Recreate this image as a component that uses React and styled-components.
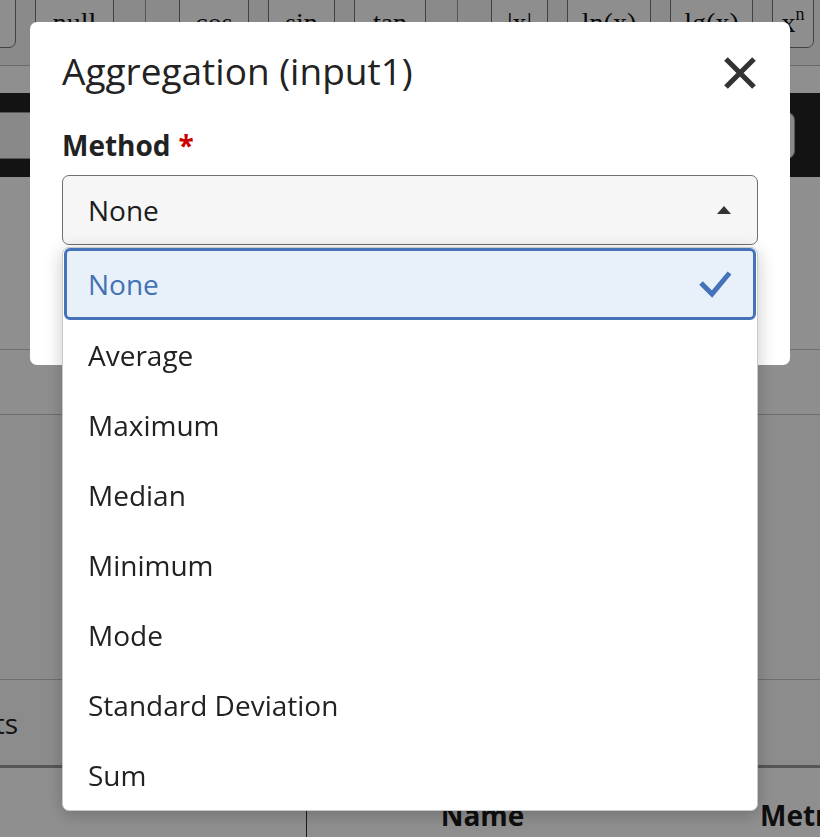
import React from 'react';
import styled, { createGlobalStyle } from 'styled-components';

const GlobalStyle = createGlobalStyle`
  html, body {
    margin: 0;
    padding: 0;
    height: 100%;
    overflow: hidden;
    background: #fff;
    font-family: "Open Sans", "Noto Sans", sans-serif;
  }
`;

const toolButtons = [
  { text: 'null', width: 79 },
  'divider',
  { text: 'cos', width: 70 },
  { text: 'sin', width: 67 },
  { text: 'tan', width: 72 },
  'divider',
  { text: '|x|', width: 57 },
  { text: 'ln(x)', width: 84 },
  { text: 'lg(x)', width: 83 },
  { text: 'x', sup: 'n', width: 42 },
];

const methods = [
  'None',
  'Average',
  'Maximum',
  'Median',
  'Minimum',
  'Mode',
  'Standard Deviation',
  'Sum',
];

const Page = styled.div`
  width: 820px;
  height: 837px;
  overflow: hidden;
  background: #fff;
`;

const Toolbar = styled.div`
  display: flex;
  align-items: stretch;
  gap: 19px;
  margin-top: -12px;
  margin-left: -44px;
  padding-bottom: 17px;
  background: #f7f7f7;
  border-bottom: 1px solid #bbb;
`;

const ToolButton = styled.div`
  flex: none;
  box-sizing: border-box;
  width: ${(p) => p.$width}px;
  height: 60px;
  padding-top: 20px;
  border: 1px solid #777;
  border-radius: 7px;
  background: #fdfdfd;
  font-family: "Liberation Serif", serif;
  font-size: 28px;
  line-height: 28px;
  color: #111;
  text-align: center;
  white-space: nowrap;
  sup {
    font-size: 18px;
    vertical-align: 12px;
    line-height: 0;
  }
`;

const ToolDivider = styled.div`
  flex: none;
  width: 1px;
  margin: 0 14px 0 12px;
  background: #999;
`;

const Strip = styled.div`
  height: 27px;
  background: #fff;
`;

const DarkBar = styled.div`
  padding: 19px 25px 18px 0;
  background: #222;
`;

const SearchField = styled.div`
  height: 45px;
  margin-left: -10px;
  border-radius: 0 8px 8px 0;
  border: 1px solid #999;
  background: #f4f4f4;
`;

const Panel = styled.div`
  height: ${(p) => p.$height}px;
  background: ${(p) => p.$bg || '#fff'};
  border-bottom: 1px solid #c4c4c4;
`;

const TabRow = styled.div`
  display: flex;
  align-items: center;
  height: 85px;
  background: #fafafa;
  border-bottom: 3px solid #999;
`;

const Tab = styled.div`
  display: flex;
  justify-content: flex-end;
  width: 18px;
  overflow: hidden;
  white-space: nowrap;
  font-size: 28px;
  color: #222;
`;

const TableHead = styled.div`
  display: grid;
  grid-template-columns: 306px 352px 1fr;
  height: 80px;
  background: #fff;
`;

const HeadCell = styled.div`
  padding-top: 26px;
  font-size: 28px;
  line-height: 42px;
  font-weight: 700;
  color: #1a1a1a;
  text-align: ${(p) => p.$align || 'center'};
  padding-left: ${(p) => p.$indent || 0}px;
  border-left: ${(p) => (p.$line ? '1px solid #333' : 'none')};
  white-space: nowrap;
  overflow: hidden;
`;

const Backdrop = styled.div`
  position: fixed;
  inset: 0;
  background: rgba(0, 0, 0, 0.44);
`;

const Modal = styled.div`
  position: fixed;
  top: 22px;
  left: 30px;
  box-sizing: border-box;
  width: 760px;
  height: 343px;
  padding: 28px 32px 0;
  background: #fff;
  border-radius: 7px;
`;

const ModalHeader = styled.div`
  display: flex;
  align-items: center;
  justify-content: space-between;
`;

const Title = styled.h2`
  margin: 0;
  font-size: 37px;
  line-height: 42px;
  font-weight: 400;
  color: #222;
`;

const CloseButton = styled.button`
  display: flex;
  padding: 0;
  margin: 3px 1px 0 0;
  border: none;
  background: none;
  color: #333;
`;

const Label = styled.div`
  margin-top: 32px;
  font-size: 28px;
  line-height: 42px;
  font-weight: 700;
  color: #222;
  span {
    color: #c00;
    margin-left: 8px;
  }
`;

const SelectBox = styled.div`
  position: relative;
  margin-top: 9px;
`;

const SelectButton = styled.div`
  display: flex;
  align-items: center;
  justify-content: space-between;
  box-sizing: border-box;
  height: 70px;
  padding: 0 26px 0 25px;
  border: 1.5px solid #707070;
  border-radius: 7px;
  background: #f5f6f5;
  font-size: 28px;
  line-height: 42px;
  color: #1c1c1c;
`;

const Caret = styled.span`
  width: 0;
  height: 0;
  border-left: 7px solid transparent;
  border-right: 7px solid transparent;
  border-bottom: 8px solid #333;
`;

const Listbox = styled.ul`
  position: absolute;
  top: 72px;
  left: 0;
  right: 0;
  margin: 0;
  padding: 0 1px;
  list-style: none;
  background: #fff;
  border: 1px solid #c6cacd;
  border-radius: 7px;
  box-shadow: 0 4px 18px rgba(0, 0, 0, 0.22);
`;

const Option = styled.li`
  display: flex;
  align-items: center;
  justify-content: space-between;
  box-sizing: border-box;
  height: ${(p) => (p.$selected ? 72 : 70)}px;
  padding: 0 ${(p) => (p.$selected ? 21 : 24)}px;
  border: ${(p) => (p.$selected ? '3px solid #4573b9' : 'none')};
  border-radius: 6px;
  background: ${(p) => (p.$selected ? '#e8f1fa' : 'transparent')};
  font-size: 28px;
  line-height: 42px;
  color: ${(p) => (p.$selected ? '#4471b4' : '#222')};
`;

const CheckIcon = () => (
  <svg width="34" height="28" viewBox="0 0 34 28">
    <path
      d="M3 13 L14 24 L31.5 3"
      fill="none"
      stroke="#4573b9"
      strokeWidth="5"
      strokeLinejoin="miter"
    />
  </svg>
);

const CloseIcon = () => (
  <svg width="34" height="32" viewBox="0 0 34 32">
    <path
      d="M3 2 L31 30 M31 2 L3 30"
      fill="none"
      stroke="currentColor"
      strokeWidth="5.2"
    />
  </svg>
);

const App = () => {
  return (
    <>
      <GlobalStyle />
      <Page>
        <Toolbar>
          <ToolButton $width={60} />
          {toolButtons.map((b, i) =>
            b === 'divider' ? (
              <ToolDivider key={i} />
            ) : (
              <ToolButton key={i} $width={b.width}>
                {b.text}
                {b.sup && <sup>{b.sup}</sup>}
              </ToolButton>
            )
          )}
        </Toolbar>
        <Strip />
        <DarkBar>
          <SearchField />
        </DarkBar>
        <Panel $height={172} />
        <Panel $height={64} $bg="#fdfdfd" />
        <Panel $height={264} $bg="#f9f9f9" />
        <TabRow>
          <Tab>Results</Tab>
        </TabRow>
        <TableHead>
          <HeadCell />
          <HeadCell $line>Name</HeadCell>
          <HeadCell $align="left" $indent={102}>
            Metric
          </HeadCell>
        </TableHead>
      </Page>
      <Backdrop />
      <Modal>
        <ModalHeader>
          <Title>Aggregation (input1)</Title>
          <CloseButton aria-label="Close">
            <CloseIcon />
          </CloseButton>
        </ModalHeader>
        <Label>
          Method<span>*</span>
        </Label>
        <SelectBox>
          <SelectButton>
            None
            <Caret />
          </SelectButton>
          <Listbox>
            {methods.map((m) => (
              <Option key={m} $selected={m === 'None'}>
                {m}
                {m === 'None' && <CheckIcon />}
              </Option>
            ))}
          </Listbox>
        </SelectBox>
      </Modal>
    </>
  );
};

export default App;
